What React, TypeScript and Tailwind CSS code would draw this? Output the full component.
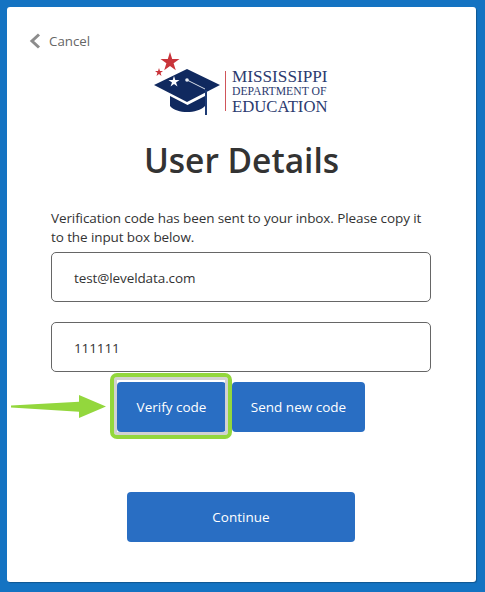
export default function App() {
  return (
    <div className="h-[592px] w-[485px] overflow-hidden bg-[#1473c2] pl-[7px] pt-[7px] font-['Open_Sans','Noto_Sans',sans-serif] text-[#333]">
      <div className="relative h-[575px] w-[469px] rounded-[3px] bg-white shadow-[1px_1px_1px_rgba(0,0,0,0.25)]">
        <div className="flex h-[68px] items-start pl-[22px] pt-[25px]">
          <div className="flex items-center">
            <svg width="12" height="16" viewBox="0 0 12 16" className="mr-[8px]">
              <path d="M10 1.5 3 8l7 6.5" fill="none" stroke="#8c8c8c" strokeWidth="3" />
            </svg>
            <span className="text-[13.300px] leading-[18px] text-[#666]">Cancel</span>
          </div>
        </div>
        <div className="absolute left-[146px] top-[44px] flex items-start">
          <svg width="72" height="64" viewBox="0 0 72 64">
            <polygon points="17,1 19.2,8 26.5,8 20.6,12.3 22.8,19.3 17,15 11.2,19.3 13.4,12.3 7.5,8 14.8,8" fill="#c9343a" />
            <polygon points="6,17 7,20 10,20 7.6,21.8 8.5,25 6,23 3.5,25 4.4,21.8 2,20 5,20" fill="#c9343a" />
            <path d="M1 34 34 18 67 34 34 51Z" fill="#10295f" />
            <path d="M17 45V55C24 63 44 63 52 55V45L34.500 54Z" fill="#10295f" />
            <polygon points="21,25 22.300,29 26.500,29 23,31.500 24.500,35.500 21,33 17.500,35.500 19,31.500 15.500,29 19.700,29" fill="#fff" />
            <path d="M34 29 52 38" fill="none" stroke="#d9dfea" strokeWidth="1" />
            <circle cx="34" cy="29" r="1.800" fill="#e8ecf3" />
            <path d="M53 39V64" stroke="#1d3a74" strokeWidth="2" />
          </svg>
          <div className="mt-[20px] h-[40px] w-px bg-[#d0555a]" />
          <div className="ml-[6px] mt-[18px] flex flex-col font-['Liberation_Serif',serif] text-[#2c3b70]">
            <span className="text-[17.200px] leading-[16px]">MISSISSIPPI</span>
            <span className="text-[11.700px] leading-[13px]">DEPARTMENT OF</span>
            <span className="text-[16.700px] leading-[17px]">EDUCATION</span>
          </div>
        </div>
        <h1 className="mt-[60px] text-center text-[33.500px] font-semibold leading-[50px] text-[#333]">User Details</h1>
        <p className="ml-[44px] mt-[24px] w-[380px] text-[13.500px] leading-[19px] tracking-[-0.1px] text-[#333]">
          Verification code has been sent to your inbox. Please copy it to the input box below.
        </p>
        <div className="ml-[44px] mt-[5px] flex h-[50px] w-[380px] items-center rounded-[5px] border border-[#666] pl-[22px] pt-[2px] text-[13.500px] tracking-[-0.1px]">test@leveldata.com</div>
        <div className="ml-[44px] mt-[20px] flex h-[50px] w-[380px] items-center rounded-[5px] border border-[#666] pl-[22px] pt-[2px] text-[13.500px] tracking-[-0.1px]">111111</div>
        <div className="ml-[110px] mt-[10px] flex gap-[6px]">
          <div className="relative h-[50px] w-[109px]">
            <button className="h-full w-full rounded-[4px] bg-[#296ec3] text-[13.500px] text-white">Verify code</button>
            <div className="absolute -bottom-[7px] -left-[7px] -right-[6px] -top-[9px] rounded-[7px] border-[4px] border-[#93d73d] shadow-[inset_0_0_0_3px_#d2d2d2]" />
          </div>
          <button className="h-[50px] w-[133px] rounded-[4px] bg-[#296ec3] text-[13.500px] text-white">Send new code</button>
        </div>
        <div className="ml-[120px] mt-[60px]">
          <button className="h-[50px] w-[228px] rounded-[4px] bg-[#296ec3] text-[13.500px] text-white">Continue</button>
        </div>
        <svg width="96" height="24" viewBox="0 0 96 24" className="absolute left-[4px] top-[388px]">
          <path d="M0 10.500 68 6.700V0L95 11.500 68 23V16.700L0 12.500Z" fill="#93d73d" />
        </svg>
      </div>
    </div>
  );
}
